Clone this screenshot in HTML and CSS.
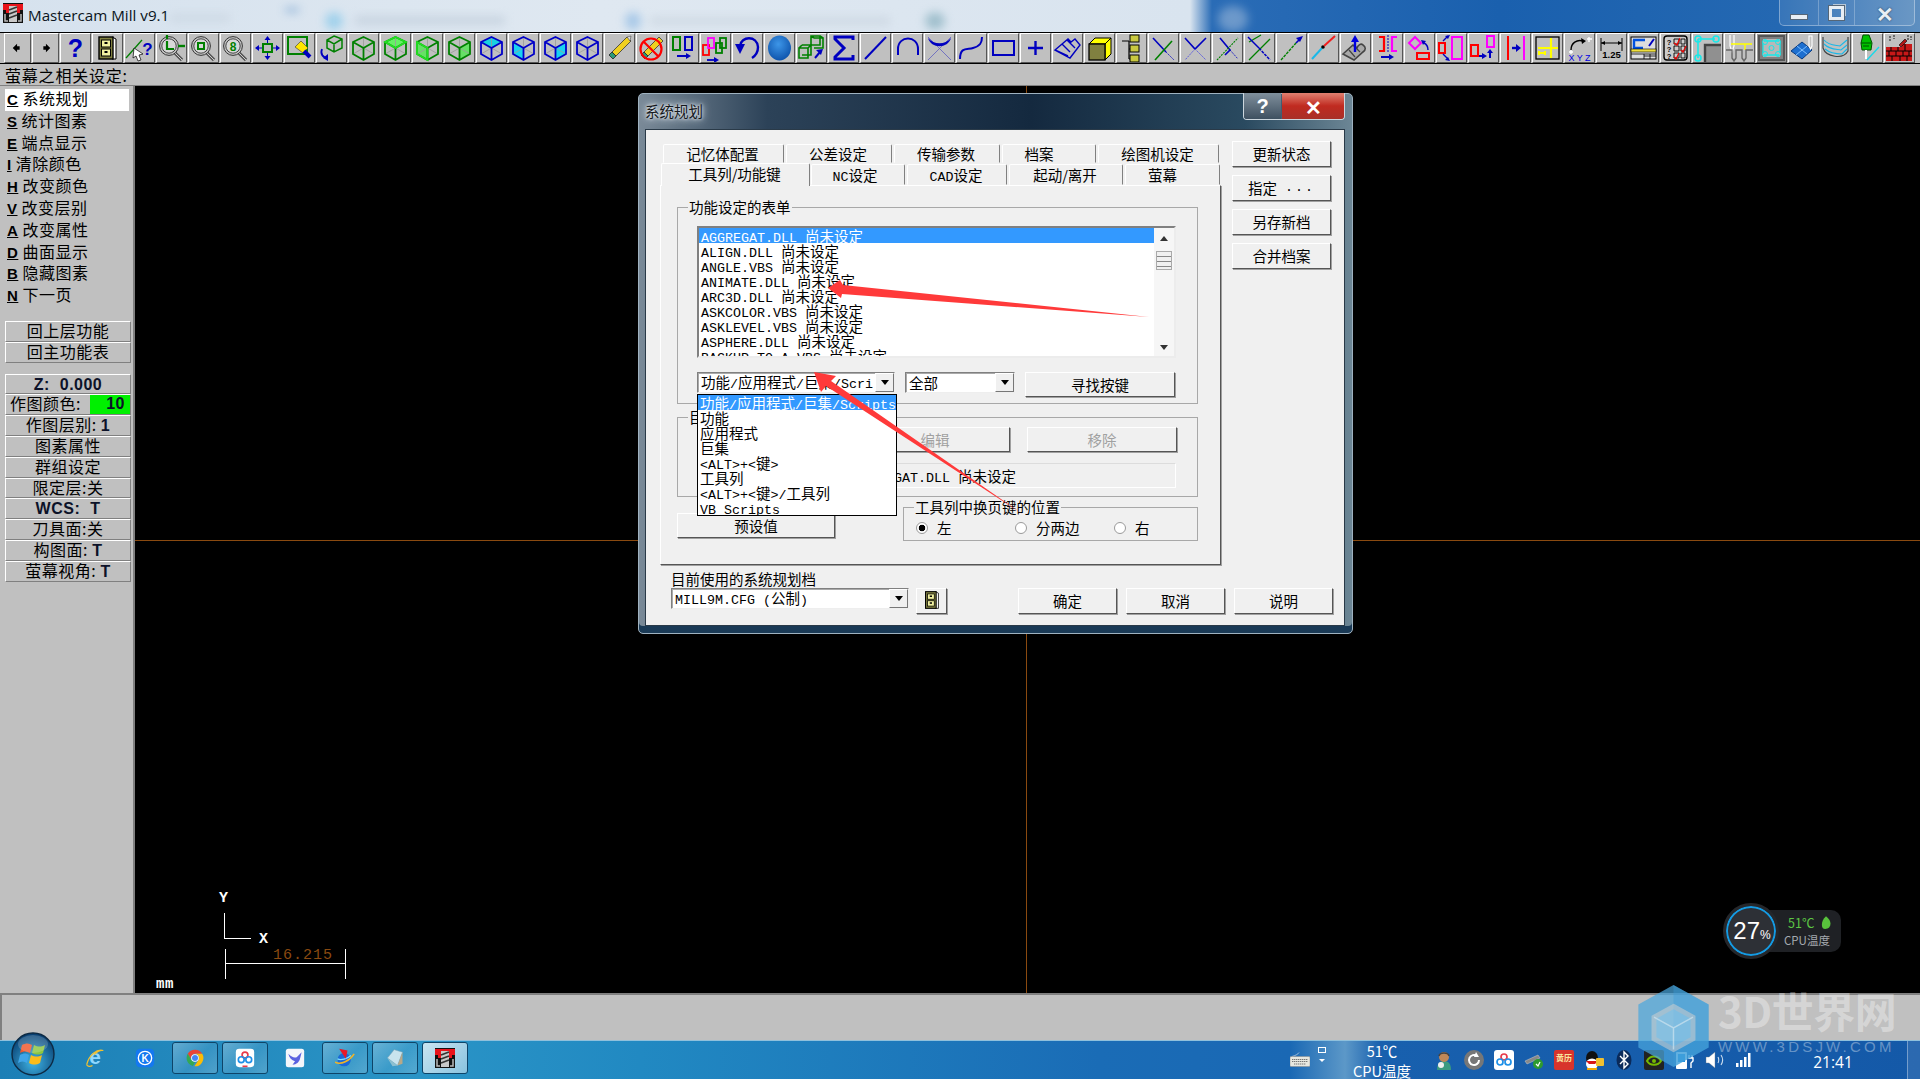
FILE: index.html
```html
<!DOCTYPE html>
<html lang="zh">
<head>
<meta charset="utf-8">
<title>Mastercam Mill v9.1</title>
<link rel="stylesheet" href="styles.css">
</head>
<body>
<svg class="defs" width="0" height="0">
  <defs>
    <symbol id="mc" viewBox="0 0 20 20">
      <rect width="20" height="20" fill="#111"/>
      <path d="M0 1h20v6h-3v3h-3V6H6v4H3V7H0z" fill="#e8141c"/>
      <rect x="6" y="3" width="8" height="16" fill="#c9c9c9"/>
      <path d="M6 7l8-3M6 11l8-3M6 15l8-3" stroke="#333" stroke-width="1.5"/>
      <path d="M2 11v7h3M18 11v7h-3" stroke="#bbb" fill="none" stroke-width="1.5"/>
    </symbol>
    <symbol id="cab" viewBox="0 0 29 28">
      <path d="M19 3l4 2v20h-4z" fill="#fff" stroke="#000"/>
      <rect x="6" y="3" width="14" height="22" fill="#808040" stroke="#000" stroke-width="1.4"/>
      <rect x="8.5" y="6" width="9" height="7" fill="#f1f1a0" stroke="#000"/>
      <rect x="8.5" y="15" width="9" height="7" fill="#f1f1a0" stroke="#000"/>
      <rect x="11.5" y="8" width="3" height="2" fill="#000"/><rect x="11.5" y="17" width="3" height="2" fill="#000"/>
    </symbol>
    <symbol id="cube" viewBox="0 0 29 28">
      <path d="M14.5 14V3M14.5 14L4 20M14.5 14l10.5 6" stroke="#9a9a9a" stroke-width=".8" fill="none"/>
      <path d="M14.5 3L25 8v12l-10.5 6L4 20V8zM4 8l10.5 6L25 8M14.5 14v12" fill="none" stroke="currentColor" stroke-width="1.8"/>
    </symbol>
    <symbol id="lens" viewBox="0 0 29 28">
      <path d="M17 18l8 8" stroke="#555" stroke-width="3.4"/>
      <path d="M17 18l8 8" stroke="#ccc" stroke-width="1"/>
      <circle cx="12" cy="12" r="9.4" fill="#c4c4c4" stroke="#333" stroke-width="1"/>
      <circle cx="12" cy="12" r="7.2" fill="#d8d8d8" stroke="#444" stroke-width="1"/>
    </symbol>
  </defs>
</svg>

<div class="app">
  <header class="titlebar">
    <div class="blur-layer">
      <span class="bl b1"></span><span class="bl b2"></span><span class="bl b3"></span><span class="bl b4"></span><span class="bl b5"></span><span class="bl b6"></span><span class="bl b7"></span><span class="bl b8"></span>
    </div>
    <svg class="app-icon"><use href="#mc"/></svg>
    <span class="app-name">Mastercam Mill v9.1</span>
    <div class="wincontrols">
      <span class="wc wc-a"><i class="wc-min"></i></span>
      <span class="wc wc-b"><i class="wc-max"></i></span>
      <span class="wc wc-x">✕</span>
    </div>
  </header>

  <nav class="toolbar">
    <button class="tb tb-s"><svg viewBox="0 0 29 28"><path d="M9 14l5-5v3h3v4h-3v3z" fill="#000"/></svg></button>
    <button class="tb tb-s"><svg viewBox="0 0 29 28"><path d="M20 14l-5-5v3h-3v4h3v3z" fill="#000"/></svg></button>
    <button class="tb"><svg viewBox="0 0 29 28"><text x="14.5" y="23" class="ic-q">?</text></svg></button>
    <button class="tb"><svg viewBox="0 0 29 28"><use href="#cab"/></svg></button>
    <button class="tb"><svg viewBox="0 0 29 28"><path d="M1 24L17 6" stroke="#008000" stroke-width="1.3"/><path d="M9 14l9 6-4 1 2 5-3 1-2-5-3 2z" fill="#fff" stroke="#000" stroke-width=".7"/><text x="22.5" y="21" class="ic-q2">?</text></svg></button>
    <button class="tb"><svg viewBox="0 0 29 28"><use href="#lens"/><path d="M10 1v4M10 7v8h7" stroke="#008000" stroke-width="2.2" fill="none"/><path d="M21 12h7" stroke="#008000" stroke-width="2.4"/></svg></button>
    <button class="tb"><svg viewBox="0 0 29 28"><use href="#lens"/><rect x="9" y="9" width="6" height="6" fill="none" stroke="#008000" stroke-width="2"/></svg></button>
    <button class="tb"><svg viewBox="0 0 29 28"><use href="#lens"/><text x="12" y="17" class="ic-8">8</text></svg></button>
    <button class="tb"><svg viewBox="0 0 29 28"><rect x="10" y="10" width="9" height="8" fill="none" stroke="#008000" stroke-width="2"/><path d="M14.5 2l3 4h-6zM14.5 26l3-4h-6zM2 14l4-3v6zM27 14l-4-3v6z" fill="#0000c0"/><path d="M14.5 5v4M14.5 19v4M5 14h4M20 14h4" stroke="#0000c0" stroke-width="1"/></svg></button>
    <button class="tb"><svg viewBox="0 0 29 28"><rect x="3" y="3" width="19" height="17" fill="none" stroke="#008000" stroke-width="2"/><path d="M10 13l6-6 7 7-5 5z" fill="#ffe600" stroke="#333" stroke-width=".6"/><path d="M19 17l6 6" stroke="#0000c0" stroke-width="4"/></svg></button>
    <button class="tb"><svg viewBox="0 0 29 28"><path d="M17 2l8 3v9l-8 4-7-4V6zM10 6l7 4 8-5M17 10v8" fill="none" stroke="#008000" stroke-width="1.5"/><path d="M5 15c-2 5 1 9 6 9" fill="none" stroke="#0000c0" stroke-width="1.8"/><path d="M11 20v7l-5-3z" fill="#0000c0"/></svg></button>
    <button class="tb"><svg viewBox="0 0 29 28" class="c-g"><use href="#cube"/></svg></button>
    <button class="tb"><svg viewBox="0 0 29 28" class="c-g"><path d="M14.5 3L25 8l-10.5 6L4 8z" fill="#66f066"/><use href="#cube"/><path d="M14.5 3L25 8l-10.5 6L4 8z" fill="none" stroke="#22e022" stroke-width="1.8"/></svg></button>
    <button class="tb"><svg viewBox="0 0 29 28" class="c-g"><path d="M4 8l10.5 6v12L4 20z" fill="#66e066"/><use href="#cube"/><path d="M4 8l10.5 6v12L4 20z" fill="none" stroke="#22e022" stroke-width="1.8"/></svg></button>
    <button class="tb"><svg viewBox="0 0 29 28" class="c-g"><path d="M25 8l-10.5 6v12L25 20z" fill="#66e066"/><use href="#cube"/></svg></button>
    <button class="tb"><svg viewBox="0 0 29 28" class="c-b"><path d="M14.5 3L25 8l-10.5 6L4 8z" fill="#19d2e0"/><use href="#cube"/></svg></button>
    <button class="tb"><svg viewBox="0 0 29 28" class="c-b"><path d="M4 8l10.5 6v12L4 20z" fill="#19d2f0"/><use href="#cube"/></svg></button>
    <button class="tb"><svg viewBox="0 0 29 28" class="c-b"><path d="M25 8l-10.5 6v12L25 20z" fill="#19d2f0"/><use href="#cube"/></svg></button>
    <button class="tb"><svg viewBox="0 0 29 28" class="c-b"><use href="#cube"/></svg></button>
    <button class="tb"><svg viewBox="0 0 29 28"><path d="M7 18L22 3l4 4-15 15z" fill="#f0d020" stroke="#333" stroke-width=".8"/><path d="M22 3l4-1-1 5z" fill="#ddd" stroke="#333" stroke-width=".5"/><path d="M7 18l4 4-3 3-4-4z" fill="#2a9a78" stroke="#222" stroke-width=".8"/></svg></button>
    <button class="tb"><svg viewBox="0 0 29 28"><path d="M7 18L22 3l4 4-15 15z" fill="#f0d020" stroke="#333" stroke-width=".8"/><path d="M7 18l4 4-3 3-4-4z" fill="#2a9a78" stroke="#222" stroke-width=".8"/><circle cx="14" cy="15" r="10.5" fill="none" stroke="#f00" stroke-width="2.2"/><path d="M7 8l14 14" stroke="#f00" stroke-width="2.2"/></svg></button>
    <button class="tb"><svg viewBox="0 0 29 28"><rect x="4" y="3" width="7" height="13" fill="none" stroke="#008000" stroke-width="2"/><rect x="16" y="3" width="7" height="13" fill="none" stroke="#0000c0" stroke-width="2"/><path d="M8 22h9" stroke="#0000c0" stroke-width="2"/><path d="M22 22l-5-3v6z" fill="#0000c0"/></svg></button>
    <button class="tb"><svg viewBox="0 0 29 28"><rect x="2" y="11" width="6" height="10" fill="none" stroke="#f00" stroke-width="1.8"/><rect x="7" y="4" width="6" height="10" fill="none" stroke="#f0f" stroke-width="1.8"/><rect x="15" y="9" width="6" height="10" fill="none" stroke="#008000" stroke-width="1.8"/><rect x="19" y="4" width="6" height="10" fill="none" stroke="#008000" stroke-width="1.8"/><path d="M6 26h9" stroke="#0000c0" stroke-width="1.8"/><path d="M18 26l-5-3v6z" fill="#0000c0"/></svg></button>
    <button class="tb"><svg viewBox="0 0 29 28"><path d="M7 12c1-10 17-11 18 1 0 5-3 9-6 11" fill="none" stroke="#0000c0" stroke-width="2.4"/><path d="M2 10h10l-5 10z" fill="#0000c0"/></svg></button>
    <button class="tb"><svg viewBox="0 0 29 28"><defs><radialGradient id="sph" cx=".45" cy=".35" r=".7"><stop offset="0" stop-color="#3d96e8"/><stop offset="1" stop-color="#0b4fa8"/></radialGradient></defs><ellipse cx="14.5" cy="14" rx="11.5" ry="12.5" fill="url(#sph)"/></svg></button>
    <button class="tb"><svg viewBox="0 0 29 28"><path d="M14 2h9v9h-9zM17 4h9v10h-9M14 2l3 2M23 2l3 2" fill="none" stroke="#008000" stroke-width="1.6"/><path d="M2 14h9v10H2zM5 11h9v10H5M2 14l3-3M11 14l3-3" fill="none" stroke="#008000" stroke-width="1.6"/><path d="M18 24l5-6" stroke="#0000c0" stroke-width="2"/><path d="M26 15l-7 1 5 5z" fill="#0000c0"/></svg></button>
    <button class="tb"><svg viewBox="0 0 29 28"><path d="M24 6V3H6v2l9 9-9 9v2h18v-4" fill="none" stroke="#0000c0" stroke-width="3"/></svg></button>
    <button class="tb"><svg viewBox="0 0 29 28"><path d="M4 25L25 3" stroke="#0000c0" stroke-width="2"/></svg></button>
    <button class="tb"><svg viewBox="0 0 29 28"><path d="M5 21V15c0-14 20-14 20 0v6" fill="none" stroke="#0000c0" stroke-width="2"/></svg></button>
    <button class="tb"><svg viewBox="0 0 29 28"><path d="M3 3l23 23M26 3L3 26" stroke="#6060c0" stroke-width=".8"/><path d="M3 4c6 7 17 7 23 0-3 11-20 11-23 0z" fill="#0000c0"/></svg></button>
    <button class="tb"><svg viewBox="0 0 29 28"><path d="M3 25c0-13 8-9 13-11 7-2 9-5 9-11" fill="none" stroke="#0000c0" stroke-width="2"/></svg></button>
    <button class="tb"><svg viewBox="0 0 29 28"><rect x="4" y="7" width="21" height="14" fill="none" stroke="#0000c0" stroke-width="2"/></svg></button>
    <button class="tb"><svg viewBox="0 0 29 28"><path d="M14.5 7v14M7 14h15" stroke="#0000c0" stroke-width="2.4"/></svg></button>
    <button class="tb"><svg viewBox="0 0 29 28"><path d="M2 16l13-11 3 3 4-3 5 6-10 13zM9 10l8 8M14 6l8 8M2 16l13 6" fill="none" stroke="#0000c0" stroke-width="1.4"/></svg></button>
    <button class="tb"><svg viewBox="0 0 29 28"><path d="M4 10l6-6h16l-6 6z" fill="#ff0" stroke="#000"/><path d="M20 10l6-6v16l-6 6z" fill="#ff0" stroke="#000"/><rect x="4" y="10" width="16" height="16" fill="#808040" stroke="#000" stroke-width="1.3"/></svg></button>
    <button class="tb"><svg viewBox="0 0 29 28"><path d="M5 7h7M12 7v18M12 15h5M12 25h5" fill="none" stroke="#000" stroke-width="1.2"/><rect x="13" y="1" width="9" height="7" fill="#c8c840" stroke="#000"/><rect x="13" y="11" width="9" height="7" fill="#c8c840" stroke="#000"/><rect x="13" y="21" width="9" height="7" fill="#c8c840" stroke="#000"/></svg></button>
    <button class="tb"><svg viewBox="0 0 29 28"><path d="M4 4l13 14" stroke="#0000c0" stroke-width="1.6"/><path d="M23 7L6 26" stroke="#008000" stroke-width="1.6"/><path d="M17 18l8 8" stroke="#0000c0" stroke-width=".8" stroke-dasharray="2 1"/></svg></button>
    <button class="tb"><svg viewBox="0 0 29 28"><path d="M4 4l10 11 11-11" fill="none" stroke="#0000c0" stroke-width="1.6"/><path d="M14 15L4 26M14 15l11 11" stroke="#5050e0" stroke-width=".9" stroke-dasharray="2 1"/></svg></button>
    <button class="tb"><svg viewBox="0 0 29 28"><path d="M7 4l10 12-5 5" fill="none" stroke="#0000c0" stroke-width="1.6"/><path d="M4 26L25 4" stroke="#008000" stroke-width="1.1" stroke-dasharray="2 1"/><path d="M17 16l8 9" stroke="#0000c0" stroke-width=".8" stroke-dasharray="2 1"/></svg></button>
    <button class="tb"><svg viewBox="0 0 29 28"><path d="M4 8L16 1M4 26l21-21" stroke="#008000" stroke-width="1.3" fill="none"/><path d="M3 3l11 11" stroke="#0000c0" stroke-width="1.5"/><path d="M14 14l11 12" stroke="#0000c0" stroke-width="1.5" stroke-dasharray="3 1"/></svg></button>
    <button class="tb"><svg viewBox="0 0 29 28"><path d="M4 26L19 9" stroke="#008000" stroke-width="1.3" stroke-dasharray="3 1"/><path d="M19 9l5-5" stroke="#0000c0" stroke-width="1.6"/><path d="M26 2l-7 2 4 4z" fill="#0000c0"/></svg></button>
    <button class="tb"><svg viewBox="0 0 29 28"><path d="M3 25L13 14" stroke="#19b8e8" stroke-width="2"/><circle cx="14" cy="13" r="1.8" fill="#000"/><path d="M15 12L26 2" stroke="#f02020" stroke-width="2"/></svg></button>
    <button class="tb"><svg viewBox="0 0 29 28"><path d="M2 20l10-9 4 3c1-3 4-5 6-3 3 2 3 5 0 7l-9 8z" fill="#a8a8a8" stroke="#444" stroke-width="1.6"/><path d="M8 16l6 7M13 12l6 6" stroke="#444" stroke-width="1.2"/><path d="M14 18V7" stroke="#0000e0" stroke-width="2.4"/><path d="M14 1l-4 7h8z" fill="#0000e0"/></svg></button>
    <button class="tb"><svg viewBox="0 0 29 28"><path d="M6 3h5v14H6" fill="none" stroke="#f00" stroke-width="2.2"/><path d="M24 3h-5v14h5" fill="none" stroke="#f0f" stroke-width="2.2"/><path d="M15 1v18" stroke="#0000c0" stroke-width="1" stroke-dasharray="2 1"/><path d="M8 23h10" stroke="#0000c0" stroke-width="2"/><path d="M21 23l-5-3v6z" fill="#0000c0"/></svg></button>
    <button class="tb"><svg viewBox="0 0 29 28"><path d="M4 9l6-6 6 6-6 6z" fill="none" stroke="#f0f" stroke-width="2"/><rect x="12" y="19" width="12" height="6" fill="none" stroke="#f00" stroke-width="2"/><path d="M23 16c0-3-2-6-4-7" fill="none" stroke="#0000c0" stroke-width="1.5"/><path d="M16 6l5 1-3 4z" fill="#0000c0"/></svg></button>
    <button class="tb"><svg viewBox="0 0 29 28"><rect x="2" y="9" width="6" height="10" fill="none" stroke="#f00" stroke-width="2"/><rect x="15" y="3" width="10" height="22" fill="none" stroke="#f0f" stroke-width="2"/><path d="M6 7l5-5M6 20l5 5" stroke="#0000c0" stroke-width="1.4"/><path d="M13 1l-5 1 3 3zM13 27l-5-1 3-3z" fill="#0000c0"/></svg></button>
    <button class="tb"><svg viewBox="0 0 29 28"><rect x="2" y="11" width="7" height="11" fill="none" stroke="#f00" stroke-width="2"/><rect x="18" y="2" width="7" height="11" fill="none" stroke="#f0f" stroke-width="2"/><path d="M10 22h5" stroke="#0000c0" stroke-width="2"/><path d="M18 22l-5-3v6zM21 15l-3 4h6z" fill="#0000c0"/><path d="M21 19v5" stroke="#0000c0" stroke-width="2"/></svg></button>
    <button class="tb"><svg viewBox="0 0 29 28"><path d="M7 2v24" stroke="#f00" stroke-width="2"/><path d="M23 2v24" stroke="#f0f" stroke-width="2"/><path d="M11 14h5" stroke="#0000c0" stroke-width="2.4"/><path d="M20 14l-5-4v8z" fill="#0000c0"/></svg></button>
    <button class="tb"><svg viewBox="0 0 29 28"><rect x="3" y="3" width="23" height="22" fill="none" stroke="#000" stroke-width="1.3"/><path d="M5 14h20M18 4v20" stroke="#ff0" stroke-width="2.2"/><path d="M5 19h8M6 17v4M12 17v4" stroke="#ff0" stroke-width="2"/></svg></button>
    <button class="tb"><svg viewBox="0 0 29 28"><path d="M6 16c0-7 6-11 12-9" fill="none" stroke="#000" stroke-width="1.4"/><path d="M21 7l-5-3 1 6z" fill="#000"/><path d="M6 16v4M4 18h4M24 3v5M22 5h5" stroke="#fff" stroke-width="1.4"/><text x="14.5" y="26.5" class="ic-xyz">X Y Z</text></svg></button>
    <button class="tb"><svg viewBox="0 0 29 28"><path d="M4 4v13M25 4v13M4 9h21" stroke="#000" fill="none" stroke-width="1"/><path d="M4 9l4-2v4zM25 9l-4-2v4z"/><text x="14.5" y="24" class="ic-dim">1.25</text></svg></button>
    <button class="tb"><svg viewBox="0 0 29 28"><rect x="2" y="3" width="25" height="22" fill="#ddd" stroke="#000"/><path d="M4 6h12M5 6v8h9" fill="none" stroke="#0050e0" stroke-width="2.4"/><path d="M20 12l5-7" stroke="#0000c0" stroke-width="2"/><rect x="2" y="15" width="25" height="3" fill="#f0e040" stroke="#000" stroke-width=".6"/><path d="M2 20h25M15 20v5M21 20v5M15 22h12" stroke="#000" stroke-width=".8"/></svg></button>
    <button class="tb"><svg viewBox="0 0 29 28"><rect x="3" y="2" width="23" height="24" rx="3" fill="#ccc" stroke="#000" stroke-width="1.4"/><path d="M13 5h5v5h-5zM20 5h4v5h-4zM13 12h5v5h-5zM20 12h4v5h-4zM13 19h5v5h-5zM20 19h4v5h-4z" fill="none" stroke="#000" stroke-width=".9"/><text x="8" y="11" class="ic-k">?</text><text x="8" y="18" class="ic-k">?</text><text x="8" y="25" class="ic-k">?</text><path d="M13 9l3 2 3-7M20 16l2 2 3-6M13 23l2 2 3-6" fill="none" stroke="#e00" stroke-width="1.2"/></svg></button>
    <button class="tb"><svg viewBox="0 0 29 28"><path d="M12 11h16v17H12z" fill="#909090"/><path d="M12 28V11h16" fill="none" stroke="#444" stroke-width="2.4"/><path d="M5 5h17M5 5v19" stroke="#19e8e8" stroke-width="1.6" fill="none"/><circle cx="5" cy="5" r="3" fill="none" stroke="#19e8e8" stroke-width="1.5"/><circle cx="23" cy="5" r="3" fill="none" stroke="#19e8e8" stroke-width="1.5"/><circle cx="5" cy="24" r="3" fill="none" stroke="#19e8e8" stroke-width="1.5"/></svg></button>
    <button class="tb"><svg viewBox="0 0 29 28"><path d="M5 1v11l2 6 2-6V1" fill="none" stroke="#fff" stroke-width="1.2"/><path d="M6 10h21M20 10v6" stroke="#ff0" stroke-width="1.4" fill="none"/><path d="M1 16h6v8l2 3 2-3v-8h6v8l2 3 2-3v-8h7" fill="none" stroke="#666" stroke-width="1.4"/></svg></button>
    <button class="tb tb-dk"><svg viewBox="0 0 29 28"><rect x="2" y="2" width="25" height="24" fill="#808080" stroke="#555" stroke-width="2"/><rect x="6" y="5" width="17" height="18" fill="#b8b8b8"/><path d="M7 7h15M7 21h15M6 9v10M23 9v10" stroke="#19e8e8" stroke-width="1.3"/><circle cx="8" cy="8" r="2.5" fill="none" stroke="#19e8e8"/><circle cx="21" cy="8" r="2.5" fill="none" stroke="#19e8e8"/><circle cx="8" cy="20" r="2.5" fill="none" stroke="#19e8e8"/><circle cx="21" cy="20" r="2.5" fill="none" stroke="#19e8e8"/><circle cx="14.5" cy="14" r="2.5" fill="none" stroke="#19e8e8"/></svg></button>
    <button class="tb"><svg viewBox="0 0 29 28"><path d="M2 17l11-9 10 8-10 9z" fill="#1d6fd0" stroke="#083a80"/><path d="M8 12l10 8M13 16l-6 5M18 12l-6 5" stroke="#7fc0ff" stroke-width="1"/><path d="M20 2v10l1.5 3 1.5-3V2z" fill="none" stroke="#fff" stroke-width="1.1"/></svg></button>
    <button class="tb"><svg viewBox="0 0 29 28"><path d="M2 3v11c3 9 20 12 25 3V3" fill="none" stroke="#444" stroke-width="1.2"/><path d="M3 6c5 6 12 5 16 6l7-6M3 10c6 6 13 5 17 6l6-5M4 15c6 5 13 5 17 5l5-5" fill="none" stroke="#18b8e8" stroke-width="1.1"/></svg></button>
    <button class="tb"><svg viewBox="0 0 29 28"><path d="M10 1h6l3 8-1 7h-9l-1-7z" fill="#00c000" stroke="#005000"/><path d="M8 9h10M10 12h6" stroke="#005000" stroke-width="1"/><path d="M13 16v9" stroke="#fff" stroke-width="2"/><path d="M14 26L26 13" stroke="#19d8e8" stroke-width="1.4"/></svg></button>
    <button class="tb"><svg viewBox="0 0 29 28"><path d="M1 13h16v-3h10v17H1z" fill="#c81818"/><path d="M1 17h26M1 22h26M6 13v4M13 13v4M20 10v7M4 17v5M11 17v5M18 17v5M24 17v5M7 22v5M15 22v5M22 22v5" stroke="#000" stroke-width="1"/><path d="M14 11l6-6 2 2-6 6z" fill="#b01818" stroke="#000" stroke-width=".6"/><path d="M5 2v6M9 1v4M23 1v5M26 2v4" stroke="#333" stroke-width="1.2" stroke-dasharray="2 1"/></svg></button>
  </nav>

  <div class="prompt">萤幕之相关设定:</div>

  <main class="main">
    <aside class="side">
      <ul class="menu">
        <li class="item current"><b>C</b> 系统规划</li>
        <li class="item"><b>S</b> 统计图素</li>
        <li class="item"><b>E</b> 端点显示</li>
        <li class="item"><b>I</b> 清除颜色</li>
        <li class="item"><b>H</b> 改变颜色</li>
        <li class="item"><b>V</b> 改变层别</li>
        <li class="item"><b>A</b> 改变属性</li>
        <li class="item"><b>D</b> 曲面显示</li>
        <li class="item"><b>B</b> 隐藏图素</li>
        <li class="item"><b>N</b> 下一页</li>
      </ul>
      <div class="sbtns first">
        <div class="sbtn">回上层功能</div>
        <div class="sbtn">回主功能表</div>
      </div>
      <div class="sbtns second">
        <div class="sbtn"><b>Z:&nbsp; 0.000</b></div>
        <div class="sbtn sbtn-color"><span>作图颜色:</span><b class="color-val">10</b></div>
        <div class="sbtn">作图层别: <b>1</b></div>
        <div class="sbtn">图素属性</div>
        <div class="sbtn">群组设定</div>
        <div class="sbtn">限定层:关</div>
        <div class="sbtn"><b>WCS:&nbsp; T</b></div>
        <div class="sbtn">刀具面:关</div>
        <div class="sbtn">构图面: <b>T</b></div>
        <div class="sbtn">萤幕视角: <b>T</b></div>
      </div>
    </aside>
    <section class="canvas">
      <i class="cross-v"></i><i class="cross-h"></i>
      <span class="ax-y">Y</span>
      <i class="ax-line"></i>
      <span class="ax-x">X</span>
      <div class="scale"><span class="scale-val">16.215</span></div>
      <span class="unit">mm</span>
      <div class="cpu">
        <div class="cpu-pill">
          <div class="cpu-temp">51℃<svg class="leaf" viewBox="0 0 12 16"><path d="M6 0c5 4 7 9 4 13-2 2-6 3-8 1C0 11 1 4 6 0z" fill="#58c23c"/></svg></div>
          <div class="cpu-lbl">CPU温度</div>
        </div>
        <div class="cpu-ring"><span class="cpu-num">27</span><span class="cpu-pc">%</span></div>
      </div>
    </section>
  </main>

  <div class="status"></div>

  <footer class="taskbar">
    <div class="orb">
      <svg viewBox="0 0 44 44"><defs><radialGradient id="orbg" cx=".5" cy=".7" r=".7"><stop offset="0" stop-color="#3fb5e6"/><stop offset="1" stop-color="#063a6c"/></radialGradient></defs><circle cx="22" cy="22" r="21" fill="url(#orbg)" stroke="#0d2a44" stroke-width="1.4"/><path d="M11 13c4-2 7-2 10 0l-2 8c-3-2-6-2-10 0z" fill="#f0562a"/><path d="M23 13c4 2 7 2 11 0l-2 8c-3 2-7 2-11 0z" fill="#8cc63f"/><path d="M9 23c4-2 6-2 9 0l-2 8c-3-2-6-2-9 0z" fill="#3fa5e8"/><path d="M20 23c4 2 7 2 11 0l-2 8c-4 2-7 2-11 0z" fill="#fbbc1a"/><ellipse cx="22" cy="12" rx="15" ry="9" fill="#fff" opacity=".18"/></svg>
    </div>
    <div class="pins">
      <div class="pin"><svg viewBox="0 0 24 24"><text x="12" y="19" class="ic-e">e</text><path d="M2 20C5 8 14 1 22 3c-3-1-8 2-11 5M2 20c1 2 4 3 7 1" fill="none" stroke="#f0c030" stroke-width="1.5"/></svg></div>
      <div class="pin"><svg viewBox="0 0 24 24"><rect x="1" y="1" width="22" height="22" rx="5" fill="#1478f0"/><circle cx="12" cy="12" r="8" fill="none" stroke="#fff" stroke-width="1.6"/><text x="12" y="16.5" class="ic-k2">K</text></svg></div>
      <div class="pin on"><svg viewBox="0 0 24 24"><path d="M12 2a10 10 0 0 1 8.7 5H12z" fill="#ea4335"/><path d="M3.3 7A10 10 0 0 1 12 2v5a5 5 0 0 0-4.3 7.5L3.3 7z" fill="#ea4335"/><path d="M3.3 7l4.4 7.5A5 5 0 0 0 12 17l-2.5 4.7A10 10 0 0 1 3.3 7z" fill="#34a853"/><path d="M20.7 7H12a5 5 0 0 1 4.3 7.5L11.3 22A10 10 0 0 0 20.7 7z" fill="#fbbc05"/><circle cx="12" cy="12" r="4.6" fill="#fff"/><circle cx="12" cy="12" r="3.6" fill="#4285f4"/></svg></div>
      <div class="pin on"><svg viewBox="0 0 24 24"><rect x="1" y="1" width="22" height="22" rx="4" fill="#fff"/><circle cx="12" cy="8.5" r="3.5" fill="none" stroke="#e83a4a" stroke-width="2"/><circle cx="7.5" cy="14" r="3.5" fill="none" stroke="#1e90e8" stroke-width="2"/><circle cx="16.5" cy="14" r="3.5" fill="none" stroke="#1e90e8" stroke-width="2"/><rect x="9" y="21" width="6" height="2" fill="#e83a4a"/></svg></div>
      <div class="pin"><svg viewBox="0 0 24 24"><rect x="1" y="1" width="22" height="22" rx="3" fill="#f4f6fb"/><path d="M4 7c4 4 7 5 10 4l6-6-2 8c-1 4-4 7-9 7l3-4C8 15 5 12 4 7z" fill="#5a62e0"/></svg></div>
      <div class="pin on"><svg viewBox="0 0 24 24"><circle cx="11" cy="14" r="8" fill="#1a68d8"/><path d="M3 13c4 2 12 0 16-4" fill="none" stroke="#7fe0ff" stroke-width="1.5"/><path d="M0 17c7 4 18-2 23-10" fill="none" stroke="#f0b428" stroke-width="1.8"/><path d="M5 1l10 2-2 10z" fill="#e81828"/></svg></div>
      <div class="pin on"><svg viewBox="0 0 24 24"><path d="M3 12L11 2l10 3-6 16z" fill="#c8e4ee" stroke="#88a8b4" stroke-width=".6"/><path d="M21 5v14l-6 2" fill="#b8a888"/><path d="M3 12l12 9-6 1z" fill="#8cc0d0"/></svg></div>
      <div class="pin on bright"><svg><use href="#mc"/></svg></div>
    </div>
    <div class="tray">
      <svg class="kbd" viewBox="0 0 20 16"><path d="M2 6c3-1 6-2 7-4" fill="none" stroke="#bcd" stroke-width=".8"/><rect x="0" y="6" width="20" height="10" rx="1" fill="#e8e8e0" stroke="#888" stroke-width=".5"/><path d="M2 9h16M2 11h16M4 13.5h12" stroke="#777" stroke-width="1.1" stroke-dasharray="1.4 .6"/></svg>
      <div class="mini"><i class="mini-win"></i><i class="mini-arr"></i></div>
      <div class="temp"><span>51℃</span><span>CPU温度</span></div>
      <div class="tray-ic">
        <span><svg viewBox="0 0 20 20"><path d="M3 20c0-7 3-9 7-9s7 2 7 9z" fill="#3a9a80"/><circle cx="10" cy="7" r="5" fill="#c08858"/><path d="M5 6c1-4 9-4 10 0" fill="none" stroke="#444" stroke-width="1.6"/><circle cx="7" cy="15" r="3" fill="#eee"/></svg></span>
        <span><svg viewBox="0 0 20 20"><circle cx="10" cy="10" r="10" fill="#777"/><path d="M15 10a5 5 0 1 1-2-4" fill="none" stroke="#fff" stroke-width="2"/><path d="M12 2l3 5-5 0z" fill="#fff"/></svg></span>
        <span><svg viewBox="0 0 20 20"><rect width="20" height="20" rx="3" fill="#fff"/><circle cx="10" cy="7" r="3" fill="none" stroke="#e83a4a" stroke-width="1.7"/><circle cx="6" cy="12" r="3" fill="none" stroke="#1e90e8" stroke-width="1.7"/><circle cx="14" cy="12" r="3" fill="none" stroke="#1e90e8" stroke-width="1.7"/></svg></span>
        <span><svg viewBox="0 0 20 20"><path d="M1 11l13-6 2 3-13 6z" fill="#888" stroke="#ccc" stroke-width=".5"/><circle cx="14" cy="14" r="5" fill="#2e9a2e"/><path d="M12 14l2 2 2-4" fill="none" stroke="#fff" stroke-width="1.2"/></svg></span>
        <span><svg viewBox="0 0 20 20"><rect width="20" height="20" rx="2" fill="#d8342c"/><text x="10" y="11" class="ic-huang">黄历</text></svg></span>
        <span><svg viewBox="0 0 20 20"><ellipse cx="8" cy="8" rx="6" ry="7" fill="#111"/><ellipse cx="8" cy="14" rx="6" ry="5.5" fill="#fff"/><path d="M2 11h12l-3 3H5z" fill="#d81818"/><path d="M3 19h10" stroke="#f5a800" stroke-width="2"/><rect x="12" y="8" width="8" height="8" rx="1" fill="#f0c030"/></svg></span>
        <span><svg viewBox="0 0 20 20"><ellipse cx="10" cy="10" rx="7.5" ry="10" fill="#0a2a5a"/><path d="M6 6l8 8-4 4V2l4 4-8 8" fill="none" stroke="#fff" stroke-width="1.4"/></svg></span>
        <span><svg viewBox="0 0 20 20"><rect width="20" height="20" rx="2" fill="#222"/><path d="M3 11c3-6 11-6 14 0-3 5-11 5-14 0z" fill="none" stroke="#76b900" stroke-width="2"/><circle cx="10" cy="11" r="2" fill="#76b900"/></svg></span>
        <span><svg viewBox="0 0 20 20"><rect x="2" y="2" width="11" height="17" rx="1" fill="#fff"/><rect x="4" y="4" width="7" height="8" fill="#2090e0"/><path d="M15 5v3M18 5v3M14 8h5v3l-2 2v5" stroke="#fff" fill="none" stroke-width="1.4"/></svg></span>
        <span><svg viewBox="0 0 20 20"><path d="M2 7h3l6-5v16l-6-5H2z" fill="#fff" stroke="#678" stroke-width=".4"/><path d="M14 7c1 2 1 4 0 6M17 5c2 3 2 7 0 10" fill="none" stroke="#cde" stroke-width="1.1"/></svg></span>
        <span><svg viewBox="0 0 20 20"><rect x="2" y="13" width="2.5" height="4" fill="#fff"/><rect x="6" y="10" width="2.5" height="7" fill="#fff"/><rect x="10" y="7" width="2.5" height="10" fill="#fff"/><rect x="14" y="3" width="2.5" height="14" fill="#fff"/></svg></span>
      </div>
      <div class="clock">21:41</div>
      <div class="showdesk"></div>
    </div>
  </footer>

  <section class="dialog">
    <div class="dlg-title">
      <span class="dlg-name">系统规划</span>
      <div class="dlg-ctrl"><span class="dc dc-help">?</span><span class="dc dc-close">✕</span></div>
    </div>
    <div class="dlg-client">
      <div class="dlg-top">
        <div class="dlg-left">
          <div class="tabs tabs-back">
            <span class="tab w1">记忆体配置</span><span class="tab w2">公差设定</span><span class="tab w2">传输参数</span><span class="tab w3">档案</span><span class="tab w1">绘图机设定</span>
          </div>
          <div class="tabs tabs-front">
            <span class="tab tab-on">工具列/功能键</span><span class="tab w4"><span class="m">NC</span>设定</span><span class="tab w5"><span class="m">CAD</span>设定</span><span class="tab w6">起动/离开</span><span class="tab w7">萤幕</span>
          </div>
          <div class="panel">
            <div class="group g1">
              <span class="legend">功能设定的表单</span>
              <div class="list">
                <div class="rows m">
                  <div class="row sel">AGGREGAT.DLL <span class="zh">尚未设定</span></div>
                  <div class="row">ALIGN.DLL <span class="zh">尚未设定</span></div>
                  <div class="row">ANGLE.VBS <span class="zh">尚未设定</span></div>
                  <div class="row">ANIMATE.DLL <span class="zh">尚未设定</span></div>
                  <div class="row">ARC3D.DLL <span class="zh">尚未设定</span></div>
                  <div class="row">ASKCOLOR.VBS <span class="zh">尚未设定</span></div>
                  <div class="row">ASKLEVEL.VBS <span class="zh">尚未设定</span></div>
                  <div class="row">ASPHERE.DLL <span class="zh">尚未设定</span></div>
                  <div class="row">BACKUP_TO_A.VBS <span class="zh">尚未设定</span></div>
                </div>
                <div class="vscroll"><i class="up"></i><i class="thumb"></i><i class="down"></i></div>
              </div>
              <div class="ctrl-row">
                <div class="combo c1">
                  <span class="combo-text">功能<span class="m">/</span>应用程式<span class="m">/</span>巨集<span class="m">/Scri</span></span><i class="arrow"></i>
                  <div class="dropdown">
                    <div class="dd sel">功能<span class="m">/</span>应用程式<span class="m">/</span>巨集<span class="m">/Scripts</span></div>
                    <div class="dd">功能</div>
                    <div class="dd">应用程式</div>
                    <div class="dd">巨集</div>
                    <div class="dd"><span class="m">&lt;ALT&gt;+&lt;</span>键<span class="m">&gt;</span></div>
                    <div class="dd">工具列</div>
                    <div class="dd"><span class="m">&lt;ALT&gt;+&lt;</span>键<span class="m">&gt;/</span>工具列</div>
                    <div class="dd"><span class="m">VB Scripts</span></div>
                  </div>
                </div>
                <div class="combo c2"><span class="combo-text">全部</span><i class="arrow"></i></div>
                <span class="btn b-find">寻找按键</span>
              </div>
            </div>
            <div class="group g2">
              <span class="legend">目前设定</span>
              <div class="edit-row">
                <span class="btn b-find off">编辑</span><span class="btn b-find off">移除</span>
              </div>
              <div class="field"><span class="m">AGGREGAT.DLL </span><span class="zh">尚未设定</span></div>
            </div>
            <div class="g-row">
              <span class="btn b-default">预设值</span>
              <div class="group g3">
                <span class="legend">工具列中换页键的位置</span>
                <label class="opt"><i class="radio checked"></i>左</label>
                <label class="opt"><i class="radio"></i>分两边</label>
                <label class="opt"><i class="radio"></i>右</label>
              </div>
            </div>
          </div>
        </div>
        <div class="dlg-right">
          <span class="btn b-side">更新状态</span>
          <span class="btn b-side">指定<span class="m dots">...</span></span>
          <span class="btn b-side">另存新档</span>
          <span class="btn b-side">合并档案</span>
        </div>
      </div>
      <div class="cfg-label">目前使用的系统规划档</div>
      <div class="cfg-row">
        <div class="combo c3"><span class="combo-text"><span class="m">MILL9M.CFG (</span>公制<span class="m">)</span></span><i class="arrow"></i></div>
        <span class="btn b-file"><svg viewBox="0 0 29 28"><use href="#cab"/></svg></span>
        <span class="btn b-ok">确定</span>
        <span class="btn b-side">取消</span>
        <span class="btn b-side">说明</span>
      </div>
    </div>
  </section>

  <svg class="arrows" viewBox="0 0 1920 1079">
    <path d="M828 288l12-8 3 5 306 32-307-23-1 4z" fill="#ff3a3a"/>
    <path d="M814 372l22 4-5 5 193 134-198-129-5 6z" fill="#ff3a3a"/>
  </svg>

  <div class="watermark">
    <svg class="wm-logo" viewBox="0 0 72 84"><path d="M36 0l36 20v44L36 84 0 64V20z" fill="#4aa6dc" opacity=".72"/><path d="M36 0l36 20v44L36 84z" fill="#3b9ad8" opacity=".4"/><path d="M36 22l20 11v22L36 66 16 55V33z" fill="#9fd0ea" opacity=".55" stroke="#cfcfcf" stroke-width="5"/><path d="M16 33l20 11 20-11M36 44v22" fill="none" stroke="#cfe4f0" stroke-width="1.5" opacity=".7"/></svg>
    <div class="wm-text"><span class="wm-big">3D世界网</span><span class="wm-small">WWW.3DSJW.COM</span></div>
  </div>
</div>
</body>
</html>
```

FILE: styles.css
```css
* { box-sizing: border-box; }
html, body { margin: 0; padding: 0; }
body { width: 1920px; height: 1079px; overflow: hidden; background: #000; font-family: "Noto Sans CJK SC", "Liberation Sans", sans-serif; }
.defs { position: absolute; }
.app { position: relative; width: 1920px; height: 1079px; display: flex; flex-direction: column; overflow: hidden; }

/* title bar */
.titlebar { position: relative; height: 32px; flex: none; display: flex; align-items: flex-start; overflow: hidden;
  background: linear-gradient(90deg, #d6e2ee 0, #dfe8f1 600px, #d9e4ef 1190px, #2a6cb6 1212px, #1a60ae 1500px, #2468b2 1780px, #5e8fc0 1920px); }
.blur-layer { position: absolute; inset: 0; filter: blur(5px); opacity: .55; }
.bl { position: absolute; display: block; }
.b1 { left: 170px; top: 14px; width: 60px; height: 8px; background: #c4d0dc; }
.b2 { left: 285px; top: 8px; width: 14px; height: 4px; background: #3f7fc0; }
.b3 { left: 325px; top: 12px; width: 18px; height: 18px; border-radius: 50%; background: #6fc0e8; }
.b4 { left: 355px; top: 16px; width: 150px; height: 9px; background: #b8c6d4; }
.b5 { left: 625px; top: 12px; width: 16px; height: 18px; border-radius: 50%; background: #79aee0; }
.b6 { left: 650px; top: 17px; width: 240px; height: 8px; background: #c2ced9; }
.b7 { left: 925px; top: 12px; width: 20px; height: 18px; border-radius: 50%; background: #6fa0b0; }
.b8 { left: 1218px; top: 6px; width: 30px; height: 26px; border-radius: 50%; background: #a4bedc; }
.app-icon { position: relative; width: 20px; height: 20px; margin: 3px 0 0 3px; flex: none; }
.app-name { position: relative; margin: 6px 0 0 5px; font: 15.2px/18px "Open Sans", "Liberation Sans", sans-serif; color: #0a1420; }
.wincontrols { position: relative; margin: 0 5px 0 auto; width: 136px; height: 26px; display: flex; border: 1px solid rgba(255,255,255,.35); border-top: 0; border-radius: 0 0 5px 5px; background: rgba(255,255,255,.09); }
.wc { display: flex; align-items: center; justify-content: center; border-right: 1px solid rgba(255,255,255,.25); color: #e8eef5; flex: none; }
.wc-a { width: 39px; }
.wc-b { width: 36px; }
.wc-x { width: 59px; border-right: 0; font-size: 21px; font-weight: 700; text-shadow: 0 0 2px #234; }
.wc-min { display: block; width: 18px; height: 6px; margin-top: 8px; background: #e8eef4; border: 1px solid #567; }
.wc-max { display: block; width: 15px; height: 14px; border: 3px solid #e8eef4; box-shadow: 3px -3px 0 -1px #b8c8d8; outline: 1px solid #567; }

/* toolbar */
.toolbar { height: 32px; flex: none; display: flex; padding-left: 4px; background: #c0c0c0; border-top: 1px solid #000; border-bottom: 1px solid #000; }
.tb { width: 31px; height: 30px; margin: 0 1px 0 0; padding: 0; flex: none; background: #c0c0c0; border: 1px solid; border-color: #fff #555 #555 #fff; display: flex; align-items: center; justify-content: center; }
.tb-s { width: 27px; }
.tb svg { width: 29px; height: 28px; display: block; }
.tb-dk { background: #9a9a9a; }
.ic-q { font: 700 25px "Liberation Sans", sans-serif; fill: #0000c0; text-anchor: middle; }
.ic-q2 { font: 700 17px "Liberation Sans", sans-serif; fill: #0000c0; text-anchor: middle; }
.ic-8 { font: 700 12px "Liberation Sans", sans-serif; fill: #008000; text-anchor: middle; }
.ic-xyz { font: 9px "Liberation Sans", sans-serif; fill: #0000e0; text-anchor: middle; }
.ic-dim { font: 700 9.5px "Liberation Sans", sans-serif; fill: #000; text-anchor: middle; }
.ic-k { font: 700 7.5px "Liberation Sans", sans-serif; fill: #000; text-anchor: middle; }
.ic-e { font: 700 25px "Liberation Sans", sans-serif; fill: #8fd8ff; text-anchor: middle; }
.ic-k2 { font: 700 12px "Liberation Sans", sans-serif; fill: #fff; text-anchor: middle; }
.ic-huang { font: 700 8px "Noto Sans CJK SC", sans-serif; fill: #f8e8a0; text-anchor: middle; }
.c-g { color: #008000; }
.c-b { color: #0000c8; }

.prompt { height: 22px; flex: none; padding-left: 5px; background: #c0c0c0; border-bottom: 1px solid #808080; font-size: 16px; letter-spacing: .8px; line-height: 23px; color: #000; }

/* main */
.main { flex: 1; display: flex; min-height: 0; }
.side { width: 135px; flex: none; background: #c0c0c0; border-right: 2px solid #808080; padding: 3px 0 0 5px; font-size: 16px; color: #000; }
.menu { list-style: none; margin: 0; padding: 0; width: 124px; }
.item { height: 21.8px; line-height: 19px; padding-left: 2px; letter-spacing: .5px; white-space: nowrap; }
.item b { font: 700 15px "Liberation Sans", sans-serif; text-decoration: underline; }
.current { background: #fff; }
.sbtns { width: 126px; display: flex; flex-direction: column; }
.first { margin-top: 14px; }
.second { margin-top: 11px; }
.sbtn { height: 20.8px; line-height: 16px; text-align: center; white-space: nowrap; letter-spacing: .5px; border: 1px solid; border-color: #fff #808080 #808080 #fff; background: #c0c0c0; }
.sbtn b { font: 700 16px "Liberation Sans", sans-serif; color: #0c1228; }
.sbtn-color { display: flex; justify-content: space-between; padding-left: 4px; }
.color-val { width: 40px; height: 19px; line-height: 18px; padding-right: 5px; text-align: right; background: #00f000; }
.canvas { flex: 1; position: relative; background: #000; }
.cross-v { position: absolute; left: 891px; top: 0; bottom: 0; width: 1px; background: #8a4a10; }
.cross-h { position: absolute; left: 0; right: 0; top: 454px; height: 1px; background: #8a4a10; }
.ax-y, .ax-x, .unit { position: absolute; font: 700 15px "Liberation Mono", monospace; color: #fff; line-height: 14px; }
.ax-y { left: 84px; top: 806px; }
.ax-x { left: 124px; top: 847px; }
.ax-line { position: absolute; left: 89px; top: 827px; width: 27px; height: 26px; border-left: 1px solid #fff; border-bottom: 1px solid #fff; }
.scale { position: absolute; left: 90px; top: 863px; width: 121px; height: 30px; border-left: 1px solid #fff; border-right: 1px solid #fff; background: linear-gradient(#fff, #fff) 0 14px / 100% 1px no-repeat; }
.scale-val { position: absolute; right: 12px; top: -1px; font: 15px/15px "Liberation Mono", monospace; letter-spacing: 1px; color: #8a4a10; }
.unit { left: 21px; top: 891px; font-size: 14px; letter-spacing: .5px; }
.cpu { position: absolute; left: 1588px; top: 817px; width: 118px; height: 58px; }
.cpu-ring { position: absolute; left: 0; top: 0; width: 56px; height: 56px; display: flex; align-items: center; justify-content: center; padding-left: 2px; border-radius: 50%; background: #2d3036; border: 3px solid #25272b; box-shadow: inset 0 0 0 2px #149be4, inset 0 0 0 3px #2d3036; color: #fff; }
.cpu-num { font: 24px/24px "Liberation Sans", sans-serif; }
.cpu-pc { font: 12px/12px "Liberation Sans", sans-serif; margin-top: 8px; }
.cpu-pill { position: absolute; left: 24px; top: 7px; width: 94px; height: 42px; padding: 2px 0 0 41px; border-radius: 0 10px 10px 0; background: #1f2125; }
.cpu-temp { display: flex; align-items: center; gap: 7px; height: 21px; font-size: 12.5px; color: #5cc544; }
.leaf { width: 10px; height: 14px; }
.cpu-lbl { font-size: 11.5px; line-height: 14px; color: #a4a9ae; white-space: nowrap; margin-left: -4px; }

.status { height: 47px; flex: none; background: #c0c0c0; border-top: 2px solid #808080; border-left: 2px solid #808080; }

/* taskbar */
.taskbar { position: relative; height: 39px; flex: none; display: flex; border-top: 1px solid #8fc0dc;
  background: linear-gradient(90deg, #1c7fb6 0, #2a94c6 420px, #2189c2 640px, #1a6cb6 1100px, #1a68b4 1290px, #5c98c8 1345px, #1860ae 1380px, #1459a8 1920px); }
.orb { position: absolute; left: 11px; top: -9px; width: 44px; height: 44px; }
.orb svg { display: block; width: 44px; height: 44px; }
.pins { display: flex; padding: 1px 0 0 70px; }
.pin { width: 50px; height: 32px; display: flex; align-items: center; justify-content: center; }
.pin svg { width: 20px; height: 20px; display: block; }
.pin.on { margin: 0 2px 0 2px; width: 46px; border: 1px solid #0e4468; border-radius: 3px; background: linear-gradient(135deg, rgba(255,255,255,.3), rgba(255,255,255,.08) 55%, rgba(255,255,255,.2)); }
.pin.bright { background: linear-gradient(135deg, rgba(255,255,255,.75), rgba(255,255,255,.45)); }
.tray { position: absolute; right: 0; top: 0; width: 630px; height: 38px; display: flex; align-items: flex-start; color: #fff; }
.kbd { width: 20px; height: 17px; margin-top: 9px; flex: none; }
.mini { width: 12px; margin: 6px 0 0 6px; display: flex; flex-direction: column; align-items: center; gap: 6px; flex: none; }
.mini-win { display: block; width: 8px; height: 6px; border: 1px solid #fff; }
.mini-arr { display: block; width: 0; height: 0; border: 3px solid transparent; border-top: 3px solid #fff; border-bottom: 0; }
.temp { width: 72px; margin-left: 18px; display: flex; flex-direction: column; align-items: center; font-size: 14.5px; line-height: 20px; flex: none; white-space: nowrap; }
.tray-ic { display: flex; margin-left: 11px; flex: none; }
.tray-ic span { width: 30px; height: 38px; display: flex; align-items: center; justify-content: center; }
.tray-ic svg { width: 20px; height: 20px; display: block; }
.clock { width: 100px; flex: none; margin-left: 24px; text-align: center; font: 15.5px/42px "Open Sans", "Liberation Sans", sans-serif; }
.showdesk { position: absolute; right: 0; top: 0; width: 13px; height: 38px; border-left: 1px solid rgba(255,255,255,.35); background: rgba(255,255,255,.1); }

/* dialog */
.dialog { position: absolute; left: 638px; top: 93px; width: 715px; height: 541px; display: flex; flex-direction: column; padding: 0 7px 7px 6px; border: 1px solid #9fb2c0; border-radius: 5px;
  background: linear-gradient(90deg, #7a8a98 0, #2c4258 18%, #14293f 55%, #2a4a60 85%, #6c8695 100%); box-shadow: inset 0 -7px 0 #1a3a56; }
.dlg-title { height: 35px; flex: none; display: flex; justify-content: space-between; align-items: flex-start; }
.dlg-name { margin-top: 8px; font-size: 14.5px; line-height: 18px; color: #14181c; text-shadow: 0 0 6px #d8e2ea, 0 0 10px #d8e2ea, 0 0 3px #fff; }
.dlg-ctrl { display: flex; gap: 1px; border: 1px solid #ccd6dd; border-top: 0; border-radius: 0 0 4px 4px; height: 27px; margin-top: -1px; overflow: hidden; }
.dc { display: flex; align-items: center; justify-content: center; color: #fff; font-weight: 700; }
.dc-help { width: 37px; font: 700 20px "Liberation Sans", sans-serif; background: linear-gradient(#7f8f9c, #3e5060); }
.dc-close { width: 62px; font-size: 20px; background: linear-gradient(#e08070, #c02a20 50%, #a83028); }
.dlg-client { flex: 1; background: #f0f0f0; border: 1px solid #2a3a48; padding: 11px 0 0 14px; font-size: 14.5px; color: #000; min-height: 0; }
.m { font: 13.33px/15px "Liberation Mono", monospace; }
.zh { font: 14.5px/15px "Noto Sans CJK SC", sans-serif; }
.dlg-top { display: flex; }
.dlg-left { width: 561px; flex: none; padding-top: 3px; }
.dlg-right { width: 99px; margin-left: 11px; display: flex; flex-direction: column; gap: 8px; }
.dots { margin-left: 8px; letter-spacing: 2px; }

.tabs { display: flex; }
.tab { height: 19px; line-height: 18px; padding-right: 2px; text-align: center; white-space: nowrap; background: #f0f0f0; border: 1px solid; border-color: #fff #808080 transparent #fff; border-radius: 2px 2px 0 0; }
.tabs-back { gap: 2px; padding-left: 3px; }
.tabs-front { gap: 2px; height: 22px; align-items: flex-end; padding-left: 1px; position: relative; z-index: 1; }
.tabs-front .tab { height: 21px; line-height: 19px; }
.tab-on { width: 149px; height: 23px !important; margin-bottom: -1px; margin-right: -1px; line-height: 19px !important; border-bottom: 0; }
.w1 { width: 121px; } .w2 { width: 106px; } .w3 { width: 94px; padding-right: 20px; }
.w4 { width: 94px; padding-right: 6px; } .w5 { width: 100px; } .w6 { width: 114px; } .w7 { width: 95px; padding-right: 20px; }

.panel { height: 380px; padding: 21px 0 0 16px; background: #f0f0f0; border: 1px solid; border-color: #fff #555 #555 #fff; box-shadow: 1px 1px 0 #a0a0a0; }
.group { position: relative; border: 1px solid #a8a8a8; }
.legend { position: absolute; left: 10px; top: -11px; padding: 0 1px; background: #f0f0f0; line-height: 20px; white-space: nowrap; }
.g1 { width: 521px; height: 197px; padding: 18px 0 0 19px; }
.g2 { width: 521px; height: 80px; margin-top: 13px; padding: 9px 0 0 182px; }
.g3 { width: 295px; height: 34px; padding: 8px 0 0 12px; display: flex; line-height: 18px; }
.list { width: 479px; height: 132px; display: flex; background: #fff; border: 2px solid; border-color: #808080 #ececec #ececec #808080; overflow: hidden; }
.rows { flex: 1; overflow: hidden; }
.row { height: 15px; padding-left: 2px; white-space: pre; line-height: 15px; }
.row.sel, .dd.sel { background: #3399ff; color: #fff; }
.vscroll { width: 20px; flex: none; display: flex; flex-direction: column; align-items: center; background: #f6f6f6; }
.up { margin-top: 8px; width: 0; height: 0; border: 4px solid transparent; border-bottom: 5px solid #333; border-top: 0; }
.down { margin: auto 0 6px; width: 0; height: 0; border: 4px solid transparent; border-top: 5px solid #333; border-bottom: 0; }
.thumb { display: block; margin-top: 10px; width: 16px; height: 19px; background: repeating-linear-gradient(#f0f0f0 0 4px, #888 4px 5px); border: 1px solid #aaa; }
.ctrl-row { display: flex; align-items: flex-start; margin-top: 14px; }
.combo { position: relative; height: 21px; display: flex; align-items: center; padding-left: 3px; background: #fff; border: 1px solid; border-color: #808080 #eee #eee #808080; box-shadow: inset 1px 1px 0 #aaa; white-space: nowrap; line-height: 18px; }
.combo-text { flex: 1; overflow: hidden; }
.c1 { width: 198px; }
.c2 { width: 110px; margin: 0 10px; }
.c3 { width: 238px; height: 21px; }
.arrow { flex: none; width: 19px; height: 19px; margin-right: 0; display: flex; align-items: center; justify-content: center; background: #f0f0f0; border: 1px solid; border-color: #fff #777 #777 #fff; }
.arrow::after { content: ""; border: 4px solid transparent; border-top: 5px solid #000; border-bottom: 0; }
.dropdown { position: absolute; left: -1px; top: 21px; z-index: 5; width: 200px; height: 122px; background: #fff; border: 1px solid #000; overflow: hidden; }
.dd { height: 15px; padding: 0 0 0 2px; line-height: 15px; white-space: nowrap; overflow: visible; }
.btn { display: flex; align-items: center; justify-content: center; flex: none; height: 25px; padding-bottom: 1px; background: #f0f0f0; border: 1px solid; border-color: #fff #555 #555 #fff; box-shadow: 1px 1px 0 #a0a0a0; white-space: nowrap; }
.b-find { width: 150px; }
.b-side { width: 99px; height: 26px; }
.b-default { width: 158px; margin-top: 6px; }
.b-file { width: 31px; height: 26px; margin-left: 7px; }
.b-file svg { width: 22px; height: 22px; }
.b-ok { width: 99px; height: 26px; margin-left: 71px; }
.off { color: #a0a0a0; }
.edit-row { display: flex; gap: 17px; }
.field { height: 25px; margin: 11px 0 0 -7px; width: 323px; line-height: 23px; border: 1px solid; border-color: #dcdcdc #fff #fff #dcdcdc; white-space: pre; }
.g-row { width: 521px; display: flex; justify-content: space-between; align-items: flex-start; margin-top: 10px; }
.opt { width: 97px; display: flex; align-items: center; gap: 9px; flex: none; margin-right: 2px; }
.radio { display: block; width: 12px; height: 12px; border-radius: 50%; border: 1px solid #9a9a9a; background: #fff; flex: none; }
.radio.checked { background: radial-gradient(circle, #000 0 3px, #fff 3.6px); }
.cfg-label { margin: 5.5px 0 0 11px; height: 17px; line-height: 16px; }
.cfg-row { display: flex; margin-left: 11px; align-items: flex-start; gap: 0; }
.cfg-row .b-side { margin-left: 9px; }

/* overlays */
.arrows { position: absolute; left: 0; top: 0; width: 1920px; height: 1079px; pointer-events: none; z-index: 10; }
.watermark { position: absolute; left: 1638px; top: 985px; z-index: 11; display: flex; gap: 9px; pointer-events: none; }
.wm-logo { width: 71px; height: 82px; flex: none; }
.wm-text { display: flex; flex-direction: column; }
.wm-big { font: 700 42px/50px "Noto Sans CJK SC", "Liberation Sans", sans-serif; color: rgba(255,255,255,.36); white-space: nowrap; letter-spacing: -.5px; }
.wm-small { font: 15px/20px "Liberation Sans", sans-serif; letter-spacing: 3.2px; color: rgba(255,255,255,.36); white-space: nowrap; margin-top: 2px; }
```
